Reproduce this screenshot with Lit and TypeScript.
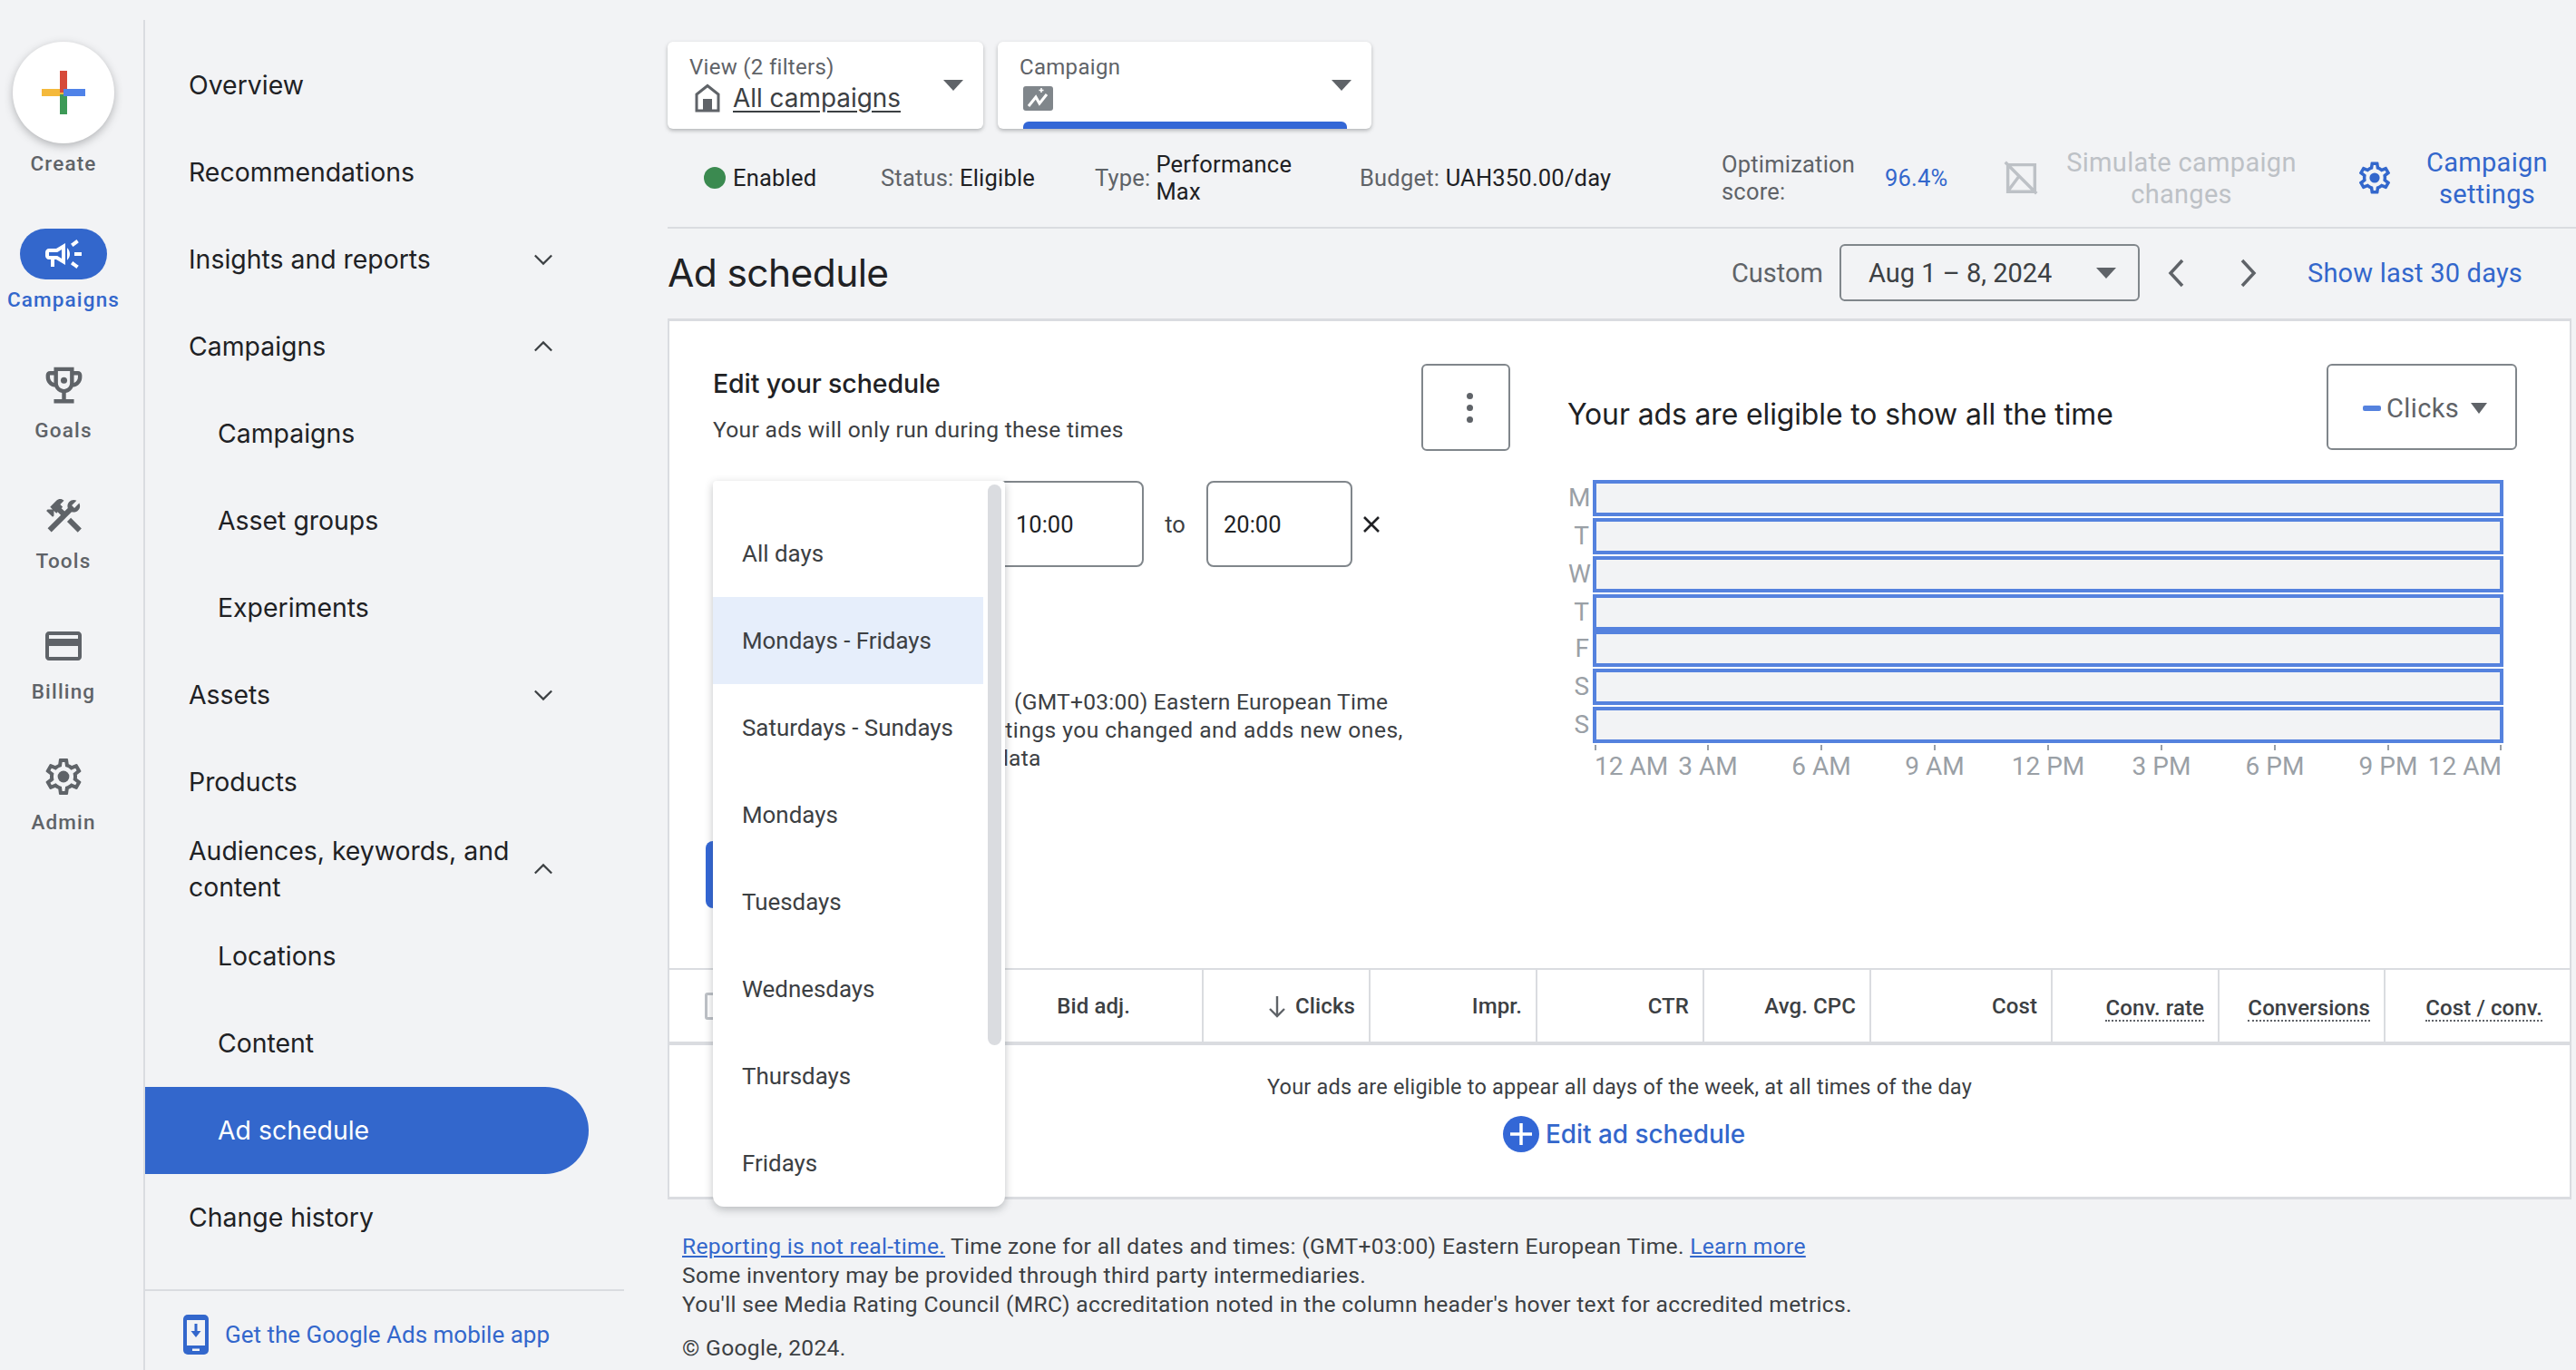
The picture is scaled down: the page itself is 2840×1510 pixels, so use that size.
import { LitElement, html, css, svg } from "lit";
import { customElement } from "lit/decorators.js";

const P = {
  campaign: "M18 11v2h4v-2h-4zm-2 6.61c.96.71 2.21 1.65 3.2 2.4.4-.53.8-1.07 1.2-1.6-.99-.74-2.24-1.68-3.2-2.4-.4.53-.8 1.07-1.2 1.6zM20.4 5.6c-.4-.53-.8-1.07-1.2-1.6-.99.74-2.24 1.68-3.2 2.4.4.53.8 1.07 1.2 1.6.96-.72 2.21-1.65 3.2-2.4zM4 9c-1.1 0-2 .9-2 2v2c0 1.1.9 2 2 2h1v4h2v-4h1l5 3V6L8 9H4zm5.03 1.71L11 9.53v4.94l-1.97-1.18-.48-.29H4v-2h4.55l.48-.29zM15.5 12c0-1.33-.58-2.53-1.5-3.35v6.69c.92-.81 1.5-2.01 1.5-3.34z",
  trophy: "M19 5h-2V3H7v2H5c-1.1 0-2 .9-2 2v1c0 2.55 1.92 4.63 4.39 4.94.63 1.5 1.98 2.63 3.61 2.96V19H7v2h10v-2h-4v-3.1c1.63-.33 2.98-1.46 3.61-2.96C19.08 12.63 21 10.55 21 8V7c0-1.1-.9-2-2-2zM5 8V7h2v3.82C5.84 10.4 5 9.3 5 8zm7 6c-1.65 0-3-1.35-3-3V5h6v6c0 1.65-1.35 3-3 3zm7-6c0 1.3-.84 2.4-2 2.82V7h2v1z",
  tools: "M13.78 15.3l6 6 2.11-2.16-6-6zM17.5 10c1.93 0 3.5-1.57 3.5-3.5 0-.58-.16-1.12-.41-1.6l-2.7 2.7-1.49-1.49 2.7-2.7c-.48-.25-1.02-.41-1.6-.41C15.57 3 14 4.57 14 6.5c0 .41.08.8.21 1.16l-1.85 1.85-1.78-1.78.71-.71-1.41-1.41L12 3.49c-1.17-1.17-3.07-1.17-4.24 0L4.22 7.03l1.41 1.41H2.81l-.71.71 3.54 3.54.71-.71V9.15l1.41 1.41.71-.71 1.78 1.78-7.41 7.41 2.12 2.12L16.34 9.79c.36.13.75.21 1.16.21z",
  card: "M20 4H4c-1.11 0-1.99.89-1.99 2L2 18c0 1.11.89 2 2 2h16c1.11 0 2-.89 2-2V6c0-1.11-.89-2-2-2zm0 14H4v-6h16v6zm0-10H4V6h16v2z",
  gear: "M19.43 12.98c.04-.32.07-.64.07-.98 0-.34-.03-.66-.07-.98l2.11-1.65c.19-.15.24-.42.12-.64l-2-3.46c-.09-.16-.26-.25-.44-.25-.06 0-.12.01-.17.03l-2.49 1c-.52-.4-1.08-.73-1.69-.98l-.38-2.65C14.46 2.18 14.25 2 14 2h-4c-.25 0-.46.18-.49.42l-.38 2.65c-.61.25-1.17.59-1.69.98l-2.49-1c-.06-.02-.12-.03-.18-.03-.17 0-.34.09-.43.25l-2 3.46c-.13.22-.07.49.12.64l2.11 1.65c-.04.32-.07.65-.07.98 0 .33.03.66.07.98l-2.11 1.65c-.19.15-.24.42-.12.64l2 3.46c.09.16.26.25.44.25.06 0 .12-.01.17-.03l2.49-1c.52.4 1.08.73 1.69.98l.38 2.65c.03.24.24.42.49.42h4c.25 0 .46-.18.49-.42l.38-2.65c.61-.25 1.17-.59 1.69-.98l2.49 1c.06.02.12.03.18.03.17 0 .34-.09.43-.25l2-3.46c.12-.22.07-.49-.12-.64l-2.11-1.65zm-1.98-1.71c.04.31.05.52.05.73 0 .21-.02.43-.05.73l-.14 1.13.89.7 1.08.84-.7 1.21-1.27-.51-1.04-.42-.9.68c-.43.32-.84.56-1.25.73l-1.06.43-.16 1.13-.2 1.35h-1.4l-.19-1.35-.16-1.13-1.06-.43c-.43-.18-.83-.41-1.23-.71l-.91-.7-1.06.43-1.27.51-.7-1.21 1.08-.84.89-.7-.14-1.13c-.03-.31-.05-.54-.05-.74s.02-.43.05-.73l.14-1.13-.89-.7-1.08-.84.7-1.21 1.27.51 1.04.42.9-.68c.43-.32.84-.56 1.25-.73l1.06-.43.16-1.13.2-1.35h1.39l.19 1.35.16 1.13 1.06.43c.43.18.83.41 1.23.71l.91.7 1.06-.43 1.27-.51.7 1.21-1.07.85-.89.7.14 1.13z",
};

const icon = (d: string, size: number, cls = "", extra: unknown = null) => html`
  <svg class=${cls} width=${size} height=${size} viewBox="0 0 24 24" fill="currentColor"><path d=${d}></path>${extra}</svg>`;

const chev = (up: boolean) => html`
  <svg class="chev" width="22" height="14" viewBox="0 0 24 14" fill="none" stroke="currentColor" stroke-width="2.4">
    <path d=${up ? "M2 12 L12 2 L22 12" : "M2 2 L12 12 L22 2"}></path></svg>`;

const tri = (w = 22, h = 12) => html`
  <svg class="tri" width=${w} height=${h} viewBox="0 0 22 12" preserveAspectRatio="none" fill="#5f6368"><path d="M0 0H22L11 12Z"></path></svg>`;

const NAV = [
  { t: "Overview" },
  { t: "Recommendations" },
  { t: "Insights and reports", c: "down" },
  { t: "Campaigns", c: "up" },
  { t: "Campaigns", sub: true },
  { t: "Asset groups", sub: true },
  { t: "Experiments", sub: true },
  { t: "Assets", c: "down" },
  { t: "Products" },
  { t: "Audiences, keywords, and content", c: "up" },
  { t: "Locations", sub: true },
  { t: "Content", sub: true },
  { t: "Ad schedule", sub: true, active: true },
  { t: "Change history" },
];

const DAYS = ["All days", "Mondays - Fridays", "Saturdays - Sundays", "Mondays", "Tuesdays", "Wednesdays", "Thursdays", "Fridays"];
const ROWS = ["M", "T", "W", "T", "F", "S", "S"];
const HOURS = ["12 AM", "3 AM", "6 AM", "9 AM", "12 PM", "3 PM", "6 PM", "9 PM", "12 AM"];
const COLS = [
  { t: "Clicks", sort: true }, { t: "Impr." }, { t: "CTR" }, { t: "Avg. CPC" }, { t: "Cost" },
  { t: "Conv. rate", dot: true }, { t: "Conversions", dot: true }, { t: "Cost / conv.", dot: true },
];

@customElement("app-root")
export class AppRoot extends LitElement {
  static styles = css`
    :host { display: block; width: 2840px; height: 1510px; overflow: hidden; position: relative; background: #f2f3f5; font-family: Roboto, sans-serif; color: #3c4043; }
    * { box-sizing: border-box; }
    svg { display: block; flex: none; }
    .page { display: flex; height: 1510px; }

    .rail { width: 160px; flex: none; margin-top: 22px; padding: 24px 18px 0 0; border-right: 2px solid #dadce0; display: flex; flex-direction: column; align-items: center; color: #5f6368; }
    .fab { width: 112px; height: 112px; flex: none; border-radius: 50%; background: #fff; box-shadow: 0 3px 10px rgba(60,64,67,.35); display: flex; align-items: center; justify-content: center; }
    .rail-label { font-size: 22.5px; line-height: 28px; letter-spacing: 1.15px; font-weight: 500; margin-top: 8px; text-align: center; white-space: nowrap; }
    .create { margin-bottom: 14px; }
    .rail-item { height: 144px; flex: none; padding-top: 44px; display: flex; flex-direction: column; align-items: center; }
    .rail-icon { width: 96px; height: 56px; border-radius: 28px; display: flex; align-items: center; justify-content: center; }
    .rail-item.on { color: #3367cc; }
    .rail-item.on .rail-icon { background: #3367cc; color: #fff; }

    .nav { width: 528px; flex: none; padding-top: 46px; display: flex; flex-direction: column; }
    .nav-item { height: 96px; flex: none; width: 489px; display: flex; align-items: center; padding-left: 48px; font-family: Inter, sans-serif; font-size: 28.4px; line-height: 40px; color: #202124; }
    .nav-item.sub { padding-left: 80px; }
    .nav-item.active { background: #3367cc; color: #fff; border-radius: 0 48px 48px 0; }
    .nav-text { width: 370px; flex: none; }
    .chev { color: #3c4043; margin-left: 10px; }
    .app { margin-top: 31px; flex: none; border-top: 2px solid #dadce0; height: 98px; display: flex; align-items: center; padding-left: 42px; gap: 18px; color: #3367cc; font-size: 26px; white-space: nowrap; }

    .main { flex: 1; min-width: 0; padding: 46px 5px 0 48px; }
    .pickers { display: flex; gap: 16px; height: 96px; }
    .picker { background: #fff; border-radius: 6px; box-shadow: 0 2px 4px rgba(60,64,67,.35); position: relative; padding: 14px 24px; overflow: hidden; }
    .p1 { width: 348px; }
    .p2 { width: 412px; }
    .picker .lbl { font-size: 24px; line-height: 28px; color: #5f6368; letter-spacing: .3px; }
    .picker .val { display: flex; align-items: center; gap: 14px; margin-top: 4px; color: #3c4043; }
    .picker .val span { font-family: Inter, sans-serif; font-size: 27.9px; line-height: 32px; color: #3c4043; text-decoration: underline; text-underline-offset: 4px; }
    .home { margin-left: 6px; }
    .picker .tri { position: absolute; right: 22px; top: 42px; }
    .perf { width: 33px; height: 27px; border-radius: 3px; background: #80868b; margin: 7px 0 0 4px; }
    .pbar { position: absolute; left: 28px; width: 357px; bottom: 0; height: 8px; background: #3367d6; border-radius: 6px 6px 0 0; }

    .status { margin-right: -5px; height: 110px; border-bottom: 2px solid #dadce0; display: grid; grid-template-columns: 40px 195px 236px 292px 399px 180px 132px 389px 1fr; align-items: center; font-size: 25.5px; line-height: 30px; color: #5f6368; letter-spacing: .2px; }
    .status b { font-weight: 400; color: #202124; }
    .flexc { display: flex; align-items: center; }
    .dot { width: 24px; height: 24px; border-radius: 50%; background: #3b8a50; margin-right: 8px; }
    .type b { margin-left: 6px; display: block; }
    .blue { color: #3367cc; }
    .act { font-size: 29px; line-height: 35px; text-align: center; letter-spacing: .3px; }
    .act span { padding-top: 2px; }
    .sim { color: #bdc1c6; margin-left: -5px; gap: 6px; }
    .sim span { width: 296px; }
    .set { color: #3367cc; margin-left: -2px; }
    .set span { width: 180px; margin-left: 13px; }

    .titlebar { height: 100px; display: flex; align-items: center; padding: 0 54px 3px 0; }
    h1 { margin: 0; font-family: Inter, sans-serif; font-weight: 400; font-size: 42.5px; color: #202124; letter-spacing: -.6px; flex: 1; }
    .custom { font-size: 29px; color: #5f6368; margin-right: 18px; }
    .date { width: 331px; height: 63px; border: 2px solid #80868b; border-radius: 6px; display: flex; align-items: center; padding: 0 24px 0 30px; font-size: 29px; color: #3c4043; background: #f2f3f5; }
    .date .tri { margin-left: auto; }
    .nav-arrows { display: flex; gap: 60px; margin: 0 55px 0 30px; color: #5f6368; }
    .show { font-size: 29px; color: #3367cc; letter-spacing: .2px; }

    .card { background: #fff; border: solid #dadce0; border-width: 3px 2px 3px 2px; margin-top: -1px; }
    .top { height: 713px; display: flex; }
    .left { width: 927px; flex: none; padding: 47px 0 0 48px; }
    .lhead { display: flex; justify-content: space-between; height: 95px; }
    .h2 { font-family: Inter, sans-serif; font-size: 28.5px; font-weight: 500; color: #202124; line-height: 40px; letter-spacing: -.1px; margin-top: 2px; }
    .h3 { font-size: 24.6px; line-height: 30px; margin-top: 16px; letter-spacing: .3px; color: #3c4043; }
    .more { width: 98px; height: 96px; border: 2px solid #80868b; border-radius: 6px; display: flex; flex-direction: column; gap: 6px; align-items: center; justify-content: center; padding-left: 8px; }
    .more i { border-radius: 50%; background: #5f6368; width: 7px; height: 7px; }
    .times { display: flex; align-items: center; margin-top: 34px; height: 95px; font-size: 25.5px; color: #202124; }
    .sel { width: 314px; flex: none; }
    .inp { width: 161px; height: 95px; border: 2px solid #80868b; border-radius: 8px; display: flex; align-items: center; padding-left: 18px; flex: none; }
    .inp + .to + .inp { padding-left: 17px; }
    .to { width: 69px; text-align: center; color: #3c4043; }
    .x { margin-left: 10px; }
    .notes { margin-top: 133px; font-size: 24.6px; line-height: 31px; white-space: nowrap; letter-spacing: .25px; color: #3c4043; }
    .n1 { padding-left: 332px; }
    .n2 { padding-left: 287px; letter-spacing: .47px; }
    .n3 { padding-left: 312px; }
    .save { width: 120px; height: 74px; margin: 76px 0 0 -8px; background: #3367d6; border-radius: 8px; }

    .right { flex: 1; padding: 47px 58px 0 64px; }
    .rhead { display: flex; justify-content: space-between; height: 95px; }
    .rtitle { font-family: Inter, sans-serif; font-size: 31.9px; color: #202124; line-height: 40px; margin: 36px 0 0 -1px; letter-spacing: -.1px; white-space: nowrap; }
    .metric { width: 210px; height: 95px; border: 2px solid #80868b; border-radius: 6px; display: flex; align-items: center; padding-left: 38px; padding-top: 2px; font-size: 29px; color: #5f6368; letter-spacing: .4px; }
    .dash { width: 20px; height: 6px; border-radius: 2px; background: #5582de; margin-right: 6px; }
    .metric .tri { margin-left: 13px; }
    .chart { margin-top: 33px; display: flex; flex-direction: column; gap: 2px; width: 1031px; }
    .row { display: flex; height: 40px; flex: none; align-items: center; }
    .row.tight { margin-top: -2px; }
    .day { width: 27px; flex: none; text-align: right; padding-right: 4px; font-size: 28px; line-height: 36px; color: #9aa0a6; margin-top: -1px; }
    .bar { flex: 1; height: 40px; background: #f2f3f5; border: 4px solid #5582de; }
    .axis { margin-left: 29px; width: 1000px; display: flex; justify-content: space-between; }
    .tick { width: 0; display: flex; flex-direction: column; align-items: center; font-size: 28px; color: #9aa0a6; white-space: nowrap; line-height: 36px; }
    .tick:first-child { align-items: flex-start; }
    .tick:last-child { align-items: flex-end; }
    .tick i { width: 2px; height: 6px; background: #9aa0a6; }

    .thead { height: 85px; border-top: 2px solid #dadce0; border-bottom: 4px solid #dadce0; display: grid; grid-template-columns: 589px 184px 184px 184px 184px 200px 184px 183px 1fr; font-size: 24px; font-weight: 500; color: #3c4043; letter-spacing: .1px; }
    .th { display: flex; align-items: center; justify-content: flex-end; padding-right: 15px; border-right: 2px solid #dadce0; gap: 8px; }
    .th:last-child { border-right: 0; padding-right: 30px; }
    .th.first { justify-content: space-between; padding: 0 79px 0 39px; }
    .cb { width: 28px; height: 30px; border: 3px solid #bdc1c6; border-radius: 3px; }
    .th u { text-decoration: none; border-bottom: 2px dotted #5f6368; line-height: 26px; padding-top: 6px; }
    .tbody { height: 167px; display: flex; flex-direction: column; align-items: center; padding-top: 31px; }
    .tbody p { margin: 0; font-size: 23.5px; line-height: 30px; letter-spacing: .2px; color: #3c4043; }
    .edit { margin: 16px 0 0 10px; display: flex; align-items: center; gap: 7px; color: #3367cc; font-family: Inter, sans-serif; font-size: 27.9px; font-weight: 500; line-height: 42px; }
    .plus { width: 40px; height: 40px; border-radius: 50%; background: #3367d6; }

    .foot { padding: 38px 0 0 16px; font-size: 24.6px; line-height: 32px; letter-spacing: .32px; color: #3c4043; margin-top: -2px; }
    .foot a { color: #3367cc; text-decoration: underline; }
    .copy { margin-top: 16px; }

    .menu { position: absolute; left: 786px; top: 530px; width: 322px; height: 800px; padding-top: 32px; background: #fff; border-radius: 4px 4px 12px 12px; box-shadow: 0 3px 10px rgba(60,64,67,.32); overflow: hidden; }
    .opt { width: 298px; height: 96px; padding-left: 32px; display: flex; align-items: center; font-size: 25.9px; color: #3c4043; white-space: nowrap; }
    .opt.on { background: #e6eefb; }
    .thumb { position: absolute; left: 303px; top: 4px; width: 15px; height: 618px; border-radius: 8px; background: #dadce0; }
  `;

  render() {
    return html`
      <div class="page">
        <aside class="rail">
          <div class="fab">
            <svg width="48" height="48" viewBox="0 0 48 48">
              <rect x="0" y="20" width="24" height="8" fill="#f4b93b"></rect>
              <rect x="20" y="0" width="8" height="24" fill="#d64a3a"></rect>
              <rect x="20" y="26" width="8" height="22" fill="#3d9a57"></rect>
              <rect x="24" y="20" width="24" height="8" fill="#4f82e8"></rect>
            </svg>
          </div>
          <div class="rail-label create">Create</div>
          ${this.railItem("Campaigns", icon(P.campaign, 48), true)}
          ${this.railItem("Goals", icon(P.trophy, 53, "", svg`<circle cx="12" cy="9.6" r="1.6"></circle>`))}
          ${this.railItem("Tools", icon(P.tools, 47))}
          ${this.railItem("Billing", icon(P.card, 48))}
          ${this.railItem("Admin", icon(P.gear, 48, "", svg`<circle cx="12" cy="12" r="3.2"></circle>`))}
        </aside>

        <nav class="nav">
          ${NAV.map((n) => html`
            <div class="nav-item ${n.sub ? "sub" : ""} ${n.active ? "active" : ""}">
              <span class="nav-text">${n.t}</span>
              ${n.c ? chev(n.c === "up") : null}
            </div>`)}
          <div class="app">
            <svg width="28" height="44" viewBox="0 0 28 44">
              <rect width="28" height="44" rx="5" fill="#3367cc"></rect>
              <rect x="4" y="6" width="20" height="28" fill="#f2f3f5"></rect>
              <path d="M12.5 10h3v8h4L14 25l-5.500-7h4z" fill="#3367cc"></path>
              <rect x="10" y="37.500" width="8" height="2.500" fill="#f2f3f5"></rect>
            </svg>
            <span>Get the Google Ads mobile app</span>
          </div>
        </nav>

        <main class="main">
          <div class="pickers">
            <div class="picker p1">
              <div class="lbl">View (2 filters)</div>
              <div class="val">
                <svg class="home" width="28" height="32" viewBox="0 0 28 32" fill="none" stroke="#5f6368" stroke-width="3">
                  <path d="M14 2.500 L26 12 V30 H2 V12 Z"></path>
                  <rect x="9" y="17" width="10" height="14" fill="#5f6368" stroke="none"></rect>
                </svg>
                <span>All campaigns</span>
              </div>
              ${tri()}
            </div>
            <div class="picker p2">
              <div class="lbl">Campaign</div>
              <div class="perf">
                <svg width="33" height="27" viewBox="0 0 33 27" fill="none" stroke="#fff" stroke-width="3"><path d="M6 22 L14 12 L18 19 L26 9"></path><path d="M20 2 V7 M17.500 4.500 H22.500" stroke-width="1.500"></path></svg>
              </div>
              ${tri()}
              <div class="pbar"></div>
            </div>
          </div>

          <div class="status">
            <div></div>
            <div class="flexc"><div class="dot"></div><b>Enabled</b></div>
            <div>Status: <b>Eligible</b></div>
            <div class="flexc type"><span>Type:</span><b>Performance<br />Max</b></div>
            <div>Budget: <b>UAH350.00/day</b></div>
            <div>Optimization<br />score:</div>
            <div class="blue">96.4%</div>
            <div class="flexc act sim">
              <svg width="46" height="46" viewBox="0 0 24 24" fill="none" stroke="currentColor" stroke-width="1.800"><path d="M4.500 4.500H20V20H4.500Z M3 3 L21 21 M5 19 L11 11 L19 19"></path></svg>
              <span>Simulate campaign changes</span>
            </div>
            <div class="flexc act set">
              ${icon(P.gear, 42, "", svg`<circle cx="12" cy="12" r="3.200"></circle>`)}
              <span>Campaign settings</span>
            </div>
          </div>

          <div class="titlebar">
            <h1>Ad schedule</h1>
            <span class="custom">Custom</span>
            <div class="date"><span>Aug 1 – 8, 2024</span>${tri()}</div>
            <div class="nav-arrows">
              <svg width="20" height="32" viewBox="0 0 20 32" fill="none" stroke="currentColor" stroke-width="3.500"><path d="M17 2 L4 16 L17 30"></path></svg>
              <svg width="20" height="32" viewBox="0 0 20 32" fill="none" stroke="currentColor" stroke-width="3.500"><path d="M3 2 L16 16 L3 30"></path></svg>
            </div>
            <span class="show">Show last 30 days</span>
          </div>

          <section class="card">
            <div class="top">
              <div class="left">
                <div class="lhead">
                  <div>
                    <div class="h2">Edit your schedule</div>
                    <div class="h3">Your ads will only run during these times</div>
                  </div>
                  <div class="more"><i></i><i></i><i></i></div>
                </div>
                <div class="times">
                  <div class="sel"></div>
                  <div class="inp">10:00</div>
                  <div class="to">to</div>
                  <div class="inp">20:00</div>
                  <svg class="x" width="22" height="22" viewBox="0 0 22 22" fill="none" stroke="#202124" stroke-width="2.600"><path d="M3 3 L19 19 M19 3 L3 19"></path></svg>
                </div>
                <div class="notes">
                  <div class="n1">(GMT+03:00) Eastern European Time</div>
                  <div class="n2">settings you changed and adds new ones,</div>
                  <div class="n3">data</div>
                </div>
                <div class="save"></div>
              </div>
              <div class="right">
                <div class="rhead">
                  <div class="rtitle">Your ads are eligible to show all the time</div>
                  <div class="metric"><div class="dash"></div>Clicks${tri(18, 12)}</div>
                </div>
                <div class="chart">
                  ${ROWS.map((d, i) => html`
                    <div class="row ${i === 4 ? "tight" : ""}"><div class="day">${d}</div><div class="bar"></div></div>`)}
                  <div class="axis">
                    ${HOURS.map((h) => html`<div class="tick"><i></i><span>${h}</span></div>`)}
                  </div>
                </div>
              </div>
            </div>
            <div class="thead">
              <div class="th first"><div class="cb"></div><span>Bid adj.</span></div>
              ${COLS.map((c) => html`
                <div class="th">
                  ${c.sort ? html`<svg width="24" height="28" viewBox="0 0 24 28" fill="none" stroke="#5f6368" stroke-width="2.400"><path d="M12 3 V25 M4 17 L12 25 L20 17"></path></svg>` : null}
                  ${c.dot ? html`<u>${c.t}</u>` : html`<span>${c.t}</span>`}
                </div>`)}
            </div>
            <div class="tbody">
              <p>Your ads are eligible to appear all days of the week, at all times of the day</p>
              <div class="edit">
                <svg class="plus" viewBox="0 0 40 40" fill="none" stroke="#fff" stroke-width="3.500"><path d="M20 8 V32 M8 20 H32"></path></svg>
                Edit ad schedule
              </div>
            </div>
          </section>

          <footer class="foot">
            <div><a>Reporting is not real-time.</a> Time zone for all dates and times: (GMT+03:00) Eastern European Time. <a>Learn more</a></div>
            <div>Some inventory may be provided through third party intermediaries.</div>
            <div>You'll see Media Rating Council (MRC) accreditation noted in the column header's hover text for accredited metrics.</div>
            <div class="copy">© Google, 2024.</div>
          </footer>
        </main>
      </div>

      <div class="menu">
        ${DAYS.map((d, i) => html`<div class="opt ${i === 1 ? "on" : ""}">${d}</div>`)}
        <div class="thumb"></div>
      </div>
    `;
  }

  private railItem(label: string, ic: unknown, on = false) {
    return html`
      <div class="rail-item ${on ? "on" : ""}">
        <div class="rail-icon">${ic}</div>
        <div class="rail-label">${label}</div>
      </div>`;
  }
}
